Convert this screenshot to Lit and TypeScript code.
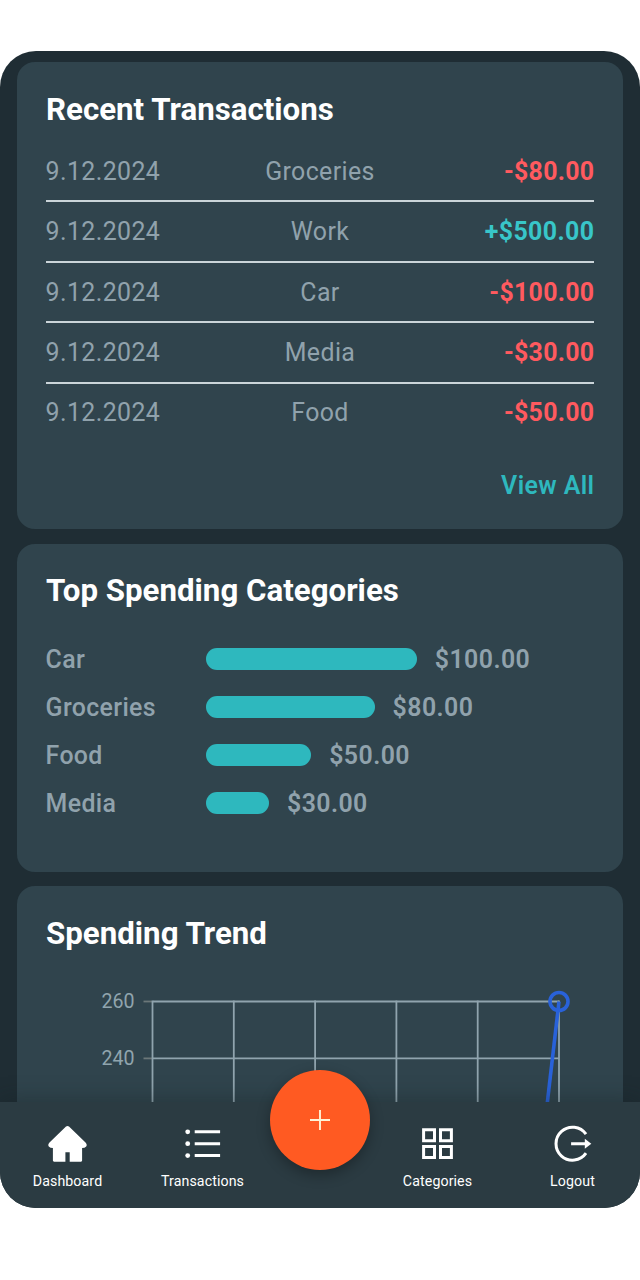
import { LitElement, html, css, svg } from "lit";
import { customElement } from "lit/decorators.js";

interface Transaction {
  date: string;
  category: string;
  amount: string;
  income?: boolean;
}

const TRANSACTIONS: Transaction[] = [
  { date: "9.12.2024", category: "Groceries", amount: "-$80.00" },
  { date: "9.12.2024", category: "Work", amount: "+$500.00", income: true },
  { date: "9.12.2024", category: "Car", amount: "-$100.00" },
  { date: "9.12.2024", category: "Media", amount: "-$30.00" },
  { date: "9.12.2024", category: "Food", amount: "-$50.00" },
];

const CATEGORIES = [
  { name: "Car", total: 100 },
  { name: "Groceries", total: 80 },
  { name: "Food", total: 50 },
  { name: "Media", total: 30 },
];

const BAR_PX_PER_DOLLAR = 2.112;

@customElement("recent-transactions")
class RecentTransactions extends LitElement {
  static styles = css`
    :host { display: block; }
    .row {
      display: grid;
      grid-template-columns: 1fr 1fr 1fr;
      align-items: center;
      box-sizing: border-box;
      height: 60.45px;
      font-size: 24.9px;
      letter-spacing: 0.4px;
      color: #90a2ac;
      border-bottom: 2px solid #cbd5d9;
    }
    .row:last-of-type { border-bottom-color: transparent; }
    .category { text-align: center; }
    .amount { text-align: right; font-weight: 700; color: #ff5a5f; letter-spacing: 0.3px; }
    .income { color: #38c6c9; letter-spacing: 0.4px; }
    .more {
      margin-top: 27px;
      text-align: right;
      font-size: 24.9px;
      line-height: 30px;
      font-weight: 600;
      letter-spacing: 0.4px;
      color: #2eb8be;
    }
  `;
  render() {
    return html`
      ${TRANSACTIONS.map(
        (t) => html`<div class="row">
          <span>${t.date}</span>
          <span class="category">${t.category}</span>
          <span class="amount ${t.income ? "income" : ""}">${t.amount}</span>
        </div>`
      )}
      <section class="more">View All</section>
    `;
  }
}

@customElement("top-categories")
class TopCategories extends LitElement {
  static styles = css`
    :host { display: flex; flex-direction: column; }
    .row {
      display: flex;
      align-items: center;
      height: 48px;
      font-size: 24.9px;
      font-weight: 500;
      letter-spacing: 0.35px;
      color: #90a2ac;
    }
    .name { width: 160px; }
    .bar { height: 22px; border-radius: 11px; background: #2eb8be; }
    .total { margin-left: 18px; font-weight: 600; letter-spacing: 0.44px; }
  `;
  render() {
    return CATEGORIES.map(
      (c) => html`<div class="row">
        <span class="name">${c.name}</span>
        <span class="bar" style="width:${c.total * BAR_PX_PER_DOLLAR}px"></span>
        <span class="total">$${c.total.toFixed(2)}</span>
      </div>`
    );
  }
}

@customElement("trend-chart")
class TrendChart extends LitElement {
  static styles = css`
    :host { display: block; }
    svg { display: block; }
    .grid { stroke: #90a4ae; stroke-width: 1.8; fill: none; }
    .tick { stroke: #6b7779; stroke-width: 1.8; }
    .line { stroke: #2962d9; stroke-width: 3.6; fill: none; }
    .label { fill: #90a4ae; font-size: 19.6px; text-anchor: end; }
  `;
  render() {
    const xs = [0, 1, 2, 3, 4, 5].map((i) => 106.5 + i * 81.3);
    const levels = [260, 240];
    const y = (i: number) => 21.5 + i * 56.9;
    return html`<svg width="549" height="200" viewBox="0 0 549 200">
      ${levels.map(
        (l, i) => svg`
          <path class="grid" d="M106.5 ${y(i)}H513"></path>
          <path class="tick" d="M97.5 ${y(i)}H106"></path>
          <text class="label" x="88.6" y="${y(i) + 6.6}">${l}</text>`
      )}
      ${xs.map((x) => svg`<path class="grid" d="M${x} 20.6V200"></path>`)}
      <path class="line" d="M513 21.5L492.5 199"></path>
      <circle class="line" cx="513" cy="21.5" r="9"></circle>
    </svg>`;
  }
}

@customElement("bottom-nav")
class BottomNav extends LitElement {
  static styles = css`
    :host {
      display: grid;
      grid-template-columns: 135px 135px 100px 135px 135px;
      box-sizing: border-box;
      height: 106px;
      background: #2b3b42;
      box-shadow: 0 0 22px rgba(20, 30, 34, 0.42);
      position: relative;
    }
    .item {
      display: flex;
      flex-direction: column;
      align-items: center;
      padding-top: 20px;
      font-size: 14.2px;
      line-height: 18px;
      letter-spacing: 0.1px;
      color: #fff;
    }
    .item svg { display: block; margin: 0 1px 6px 0; }
    .add {
      position: absolute;
      left: 270px;
      top: -32px;
      width: 100px;
      height: 100px;
      border-radius: 50%;
      background: #ff5a22;
      box-shadow: 0 5px 14px rgba(0, 0, 0, 0.3);
      display: grid;
      place-items: center;
    }
  `;
  render() {
    return html`
      <div class="item">
        <svg width="44" height="44" viewBox="-0.5 0 44 44" fill="#fff">
          <path d="M20.5 4.6Q22 3.2 23.5 4.6L40 20.4Q42.2 22.9 40.4 24.8Q39.4 26 36.6 26V38.6Q36.6 39.7 35.5 39.7H24.2V30.2H19.9V39.7H8.6Q7.4 39.7 7.4 38.6V26Q4.6 26 3.6 24.8Q1.8 22.9 4 20.4Z"></path>
        </svg>
        <span>Dashboard</span>
      </div>
      <div class="item">
        <svg width="44" height="44" viewBox="-0.5 0 44 44" fill="#fff">
          <circle cx="7.2" cy="9.8" r="2.4"></circle>
          <circle cx="7.2" cy="21.7" r="2.4"></circle>
          <circle cx="7.2" cy="33.6" r="2.4"></circle>
          <path d="M14.2 8.3H39.6V11.3H14.2ZM14.2 20.2H39.6V23.2H14.2ZM14.2 32.1H39.6V35.1H14.2Z"></path>
        </svg>
        <span>Transactions</span>
      </div>
      <div></div>
      <div class="item">
        <svg width="44" height="44" viewBox="-0.5 0 44 44" fill="none" stroke="#fff" stroke-width="3">
          <path d="M8.1 7.7H19V18.7H8.1ZM25 7.7H35.9V18.7H25ZM8.1 24.6H19V35.5H8.1ZM25 24.6H35.9V35.5H25Z"></path>
        </svg>
        <span>Categories</span>
      </div>
      <div class="item">
        <svg width="44" height="44" viewBox="-0.5 0 44 44" fill="none" stroke="#fff" stroke-width="3">
          <path d="M35.5 12.2A16.5 16.5 0 1 0 35.5 31.2"></path>
          <path d="M20.6 21.7H35"></path>
          <path d="M34.3 16.7L40.8 21.7L34.3 26.7Z" fill="#fff" stroke="none"></path>
        </svg>
        <span>Logout</span>
      </div>
      <div class="add">
        <svg width="22" height="22" viewBox="0 0 22 22" stroke="#fff3d6" stroke-width="1.9">
          <path d="M1 11H21M11 1V21"></path>
        </svg>
      </div>
    `;
  }
}

@customElement("app-root")
class AppRoot extends LitElement {
  static styles = css`
    :host {
      display: block;
      box-sizing: border-box;
      height: 1280px;
      padding-top: 51px;
      background: #fff;
      font-family: Roboto, "Liberation Sans", sans-serif;
    }
    .screen {
      display: flex;
      flex-direction: column;
      width: 640px;
      height: 1157px;
      border-radius: 36px;
      overflow: hidden;
      background: #1f2d34;
    }
    .content {
      flex: 1;
      min-height: 0;
      overflow: hidden;
      display: flex;
      flex-direction: column;
      gap: 14.5px;
      padding: 11px 17px 0;
    }
    .card {
      flex: none;
      box-sizing: border-box;
      border-radius: 18px;
      padding: 28px 28.6px 0;
      background: #30444d;
    }
    .recent { height: 467px; }
    .top, .trend { padding-top: 27.4px; }
    .top { height: 328.4px; }
    .trend { height: 330px; }
    h2 {
      margin: 0;
      font-size: 32px;
      line-height: 38px;
      font-weight: 700;
      color: #fff;
      white-space: nowrap;
      transform: scaleX(0.977);
      transform-origin: left center;
    }
    .recent h2 { margin-bottom: 14px; }
    .top h2 { margin-bottom: 26.6px; }
    .trend h2 { margin-bottom: 28.2px; }
  `;
  render() {
    return html`
      <main class="screen">
        <div class="content">
          <section class="card recent">
            <h2>Recent Transactions</h2>
            <recent-transactions></recent-transactions>
          </section>
          <section class="card top">
            <h2>Top Spending Categories</h2>
            <top-categories></top-categories>
          </section>
          <section class="card trend">
            <h2>Spending Trend</h2>
            <trend-chart></trend-chart>
          </section>
        </div>
        <bottom-nav></bottom-nav>
      </main>
    `;
  }
}
